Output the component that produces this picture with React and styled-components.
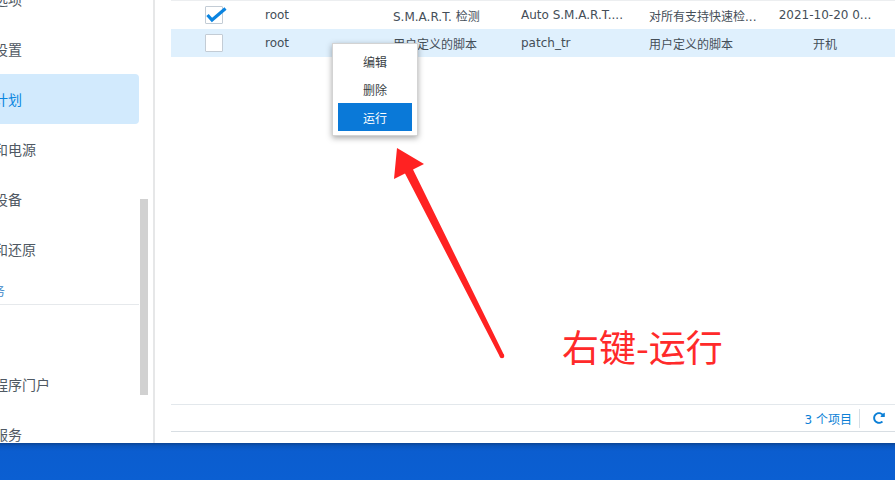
import React from "react";
import styled, { createGlobalStyle } from "styled-components";
import { FaRedoAlt } from "react-icons/fa";

const Global = createGlobalStyle`
  html, body { margin: 0; padding: 0; background: #fff; overflow: hidden; }
  body { font-family: "DejaVu Sans", "Noto Sans CJK SC", sans-serif; }
  * { box-sizing: border-box; }
`;

const Page = styled.div`
  position: relative;
  width: 895px;
  height: 480px;
  display: flex;
  flex-direction: column;
  overflow: hidden;
`;

const Window = styled.div`
  height: 443px;
  display: flex;
  background: #fff;
`;

const Sidebar = styled.aside`
  width: 155px;
  flex: none;
  display: flex;
  border-right: 2px solid #e6e7e8;
  overflow: hidden;
`;

const NavList = styled.nav`
  width: 140px;
  flex: none;
  margin-top: -26px;
  display: flex;
  flex-direction: column;
`;

const NavItem = styled.div`
  height: 50px;
  flex: none;
  display: flex;
  align-items: center;
  margin-left: -34px;
  width: 173px;
  border-radius: 4px;
  font-size: 14px;
  white-space: nowrap;
  color: ${(p) => (p.$active ? "#0a86e0" : "#4f5963")};
  background: ${(p) => (p.$active ? "#d2eafd" : "transparent")};
`;

const NavHeader = styled.div`
  height: 31px;
  flex: none;
  margin-left: -19px;
  width: 158px;
  display: flex;
  align-items: center;
  padding-top: 2px;
  font-size: 12px;
  color: #3b86c8;
  border-bottom: 1px solid #e6e9ec;
  margin-bottom: 4px;
`;

const ScrollTrack = styled.div`
  width: 13px;
  flex: none;
  padding-top: 199px;
`;

const ScrollThumb = styled.div`
  width: 8px;
  height: 196px;
  background: #d1d1d1;
`;

const Main = styled.main`
  flex: 1;
  min-width: 0;
  display: flex;
  flex-direction: column;
  padding-left: 16px;
  padding-bottom: 11px;
`;

const TableBody = styled.div`
  flex: 1;
  border-top: 1px solid #eceef0;
  display: flex;
  flex-direction: column;
`;

const Row = styled.div`
  height: 28px;
  flex: none;
  display: grid;
  grid-template-columns: 86px 128px 128px 128px 128px 112px 120px;
  align-items: center;
  background: ${(p) => (p.$selected ? "#dff0fd" : "transparent")};
  font-size: 12px;
  color: #444e58;
`;

const Cell = styled.div`
  padding: 0 8px;
  white-space: nowrap;
  overflow: hidden;
  text-align: ${(p) => p.$align || "left"};
`;

const CheckCell = styled.div`
  display: flex;
  justify-content: center;
  align-items: center;
`;

const Box = styled.div`
  position: relative;
  width: 18px;
  height: 18px;
  border: 1px solid #c3ccd5;
  border-radius: 1px;
  background: #fff;
`;

const CheckMark = styled.svg`
  position: absolute;
  left: 0;
  top: 0;
  overflow: visible;
`;

const Footer = styled.div`
  height: 28px;
  flex: none;
  border-top: 1px solid #e3e8ec;
  border-bottom: 1px solid #d8dee3;
  display: flex;
  align-items: center;
  justify-content: flex-end;
  padding-right: 10px;
  font-size: 12px;
  color: #0b7fd6;
`;

const Count = styled.span`
  padding-right: 7px;
`;

const Divider = styled.span`
  width: 1px;
  height: 19px;
  background: #d6dee5;
  margin-right: 13px;
`;

const Taskbar = styled.div`
  flex: 1;
  background: linear-gradient(#0b4494 0px, #0a55bd 3px, #0b5dcf 8px, #0b5fd2 100%);
`;

const Menu = styled.div`
  position: absolute;
  left: 332px;
  top: 43px;
  width: 86px;
  padding: 3px 5px 4px;
  background: #fff;
  border: 1px solid #d3d3d3;
  box-shadow: 0 2px 6px rgba(0, 0, 0, 0.35);
  display: flex;
  flex-direction: column;
`;

const MenuItem = styled.div`
  height: 28px;
  display: flex;
  align-items: center;
  justify-content: center;
  font-size: 12px;
  color: ${(p) => (p.$active ? "#fff" : "#3a3f45")};
  background: ${(p) => (p.$active ? "#0a79d8" : "transparent")};
`;

const Overlay = styled.svg`
  position: absolute;
  left: 0;
  top: 0;
  pointer-events: none;
`;

const Annotation = styled.div`
  position: absolute;
  left: 562px;
  top: 328px;
  font-family: "Noto Sans CJK SC", sans-serif;
  font-size: 37px;
  line-height: 1;
  color: #ff2a2a;
  white-space: nowrap;
`;

const Checkbox = ({ checked }) => (
  <CheckCell>
    <Box>
      {checked && (
        <CheckMark width="18" height="18" viewBox="0 0 18 18">
          <path d="M1.5 8 L6 13 L19.5 1.5" fill="none" stroke="#0a84e0" strokeWidth="3.2" strokeLinejoin="miter" />
        </CheckMark>
      )}
    </Box>
  </CheckCell>
);

const navItems = [
  { label: "区域选项" },
  { label: "通知设置" },
  { label: "任务计划", active: true },
  { label: "硬件和电源" },
  { label: "外部设备" },
  { label: "更新和还原" },
];
const navItems2 = [{ label: "帐户" }, { label: "应用程序门户" }, { label: "索引服务" }];

const rows = [
  { checked: true, owner: "root", type: "S.M.A.R.T. 检测", name: "Auto S.M.A.R.T....", desc: "对所有支持快速检...", next: "2021-10-20 0..." },
  { checked: false, owner: "root", type: "用户定义的脚本", name: "patch_tr", desc: "用户定义的脚本", next: "开机", selected: true },
];

export default function App() {
  return (
    <Page>
      <Global />
      <Window>
        <Sidebar>
          <NavList>
            {navItems.map((n) => (
              <NavItem key={n.label} $active={n.active}>{n.label}</NavItem>
            ))}
            <NavHeader>服务</NavHeader>
            {navItems2.map((n) => (
              <NavItem key={n.label}>{n.label}</NavItem>
            ))}
          </NavList>
          <ScrollTrack>
            <ScrollThumb />
          </ScrollTrack>
        </Sidebar>
        <Main>
          <TableBody>
            {rows.map((r, i) => (
              <Row key={i} $selected={r.selected}>
                <Checkbox checked={r.checked} />
                <Cell>{r.owner}</Cell>
                <Cell>{r.type}</Cell>
                <Cell>{r.name}</Cell>
                <Cell>{r.desc}</Cell>
                <Cell $align="center">{r.next}</Cell>
                <Cell />
              </Row>
            ))}
          </TableBody>
          <Footer>
            <Count>3 个项目</Count>
            <Divider />
            <FaRedoAlt size={12} />
          </Footer>
        </Main>
      </Window>
      <Taskbar />
      <Menu>
        <MenuItem>编辑</MenuItem>
        <MenuItem>删除</MenuItem>
        <MenuItem $active>运行</MenuItem>
      </Menu>
      <Overlay width="895" height="480" viewBox="0 0 895 480">
        <polygon
          points="397,148 424,164 413,169.5 504,355 500,357 405,173.5 394,179"
          fill="#ff2222"
        />
        <circle cx="502" cy="356" r="2.3" fill="#ff2222" />
      </Overlay>
      <Annotation>右键-运行</Annotation>
    </Page>
  );
}
